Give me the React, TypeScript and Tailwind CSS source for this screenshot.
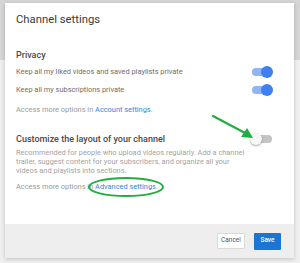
import React from "react";

function Toggle({ on }: { on: boolean }) {
  return (
    <div className="relative w-[22px] h-[12px] flex items-center shrink-0">
      <div className={`w-[20px] h-[8px] rounded-full ml-[1px] ${on ? "bg-[#8fb5f5]" : "bg-[#c4c4c4]"}`} />
      {on ? (
        <div className="absolute right-0 top-[0px] w-[12px] h-[12px] rounded-full bg-[#3f7ff0]" />
      ) : (
        <div className="absolute left-[-1px] top-[0px] w-[12px] h-[12px] rounded-full bg-[#f7f7f7] shadow-[0_1px_2px_rgba(0,0,0,0.35)]" />
      )}
    </div>
  );
}

export default function App() {
  return (
    <div className="relative w-[300px] h-[263px] overflow-hidden" style={{ fontFamily: "Roboto, 'Liberation Sans', sans-serif" }}>
      <div className="h-[60px] bg-[#d5d5d5]" />
      <div className="h-[203px] bg-[#efefef]" />
      <div className="absolute left-[5px] top-[3px] w-[289px] h-[255px] bg-white flex flex-col shadow-[0_1px_4px_rgba(0,0,0,0.2)]">
        <div className="flex-1 pl-[11px] pr-[21px] pt-[10px]">
          <div className="text-[11.3px] leading-[14px] text-[#3a3a3a]">Channel settings</div>
          <div className="mt-[22px] text-[9px] leading-[12px] font-medium text-[#4a4a4a]">Privacy</div>
          <div className="mt-[3px] h-[16px] flex items-center justify-between">
            <span className="text-[7.4px] text-[#6e6e6e]">Keep all my liked videos and saved playlists private</span>
            <Toggle on />
          </div>
          <div className="mt-[2px] h-[16px] flex items-center justify-between">
            <span className="text-[7.4px] text-[#6e6e6e]">Keep all my subscriptions private</span>
            <Toggle on />
          </div>
          <div className="mt-[7px] text-[7.4px] leading-[10px] text-[#9a9a9a]">
            Access more options in <span className="text-[#3088dc]">Account settings</span>.
          </div>
          <div className="mt-[18px] h-[12px] flex items-center justify-between">
            <span className="text-[9px] leading-[12px] font-medium text-[#4a4a4a]">Customize the layout of your channel</span>
            <Toggle on={false} />
          </div>
          <div className="mt-[2.5px] text-[7.4px] leading-[9px] text-[#a3a3a3] pr-[28px]">
            Recommended for people who upload videos regularly. Add a channel trailer, suggest content for your subscribers, and organize all your videos and playlists into sections.
          </div>
          <div className="mt-[7.5px] text-[7.4px] leading-[10px] text-[#9a9a9a]">
            Access more options in <span className="text-[#3088dc]">Advanced settings</span>.
          </div>
        </div>
        <div className="h-[34px] bg-[#eeeeee] flex items-center justify-end gap-[9px] pr-[13px]">
          <button className="h-[16px] w-[28px] bg-white border border-[#dadada] text-[6.5px] text-[#555] rounded-[1px]">Cancel</button>
          <button className="h-[17px] w-[27px] bg-[#1c75d3] text-[6.5px] text-white rounded-[1px] font-medium">Save</button>
        </div>
      </div>
      <svg className="absolute left-0 top-0 pointer-events-none" width="300" height="263" viewBox="0 0 300 263">
        <ellipse cx="126" cy="187" rx="37" ry="9" fill="none" stroke="#1fae3f" strokeWidth="2" />
        <line x1="213" y1="116" x2="247" y2="134" stroke="#1fae3f" strokeWidth="2.2" strokeLinecap="round" />
        <polygon points="253,138 241,137 247,128" fill="#1fae3f" />
      </svg>
    </div>
  );
}
